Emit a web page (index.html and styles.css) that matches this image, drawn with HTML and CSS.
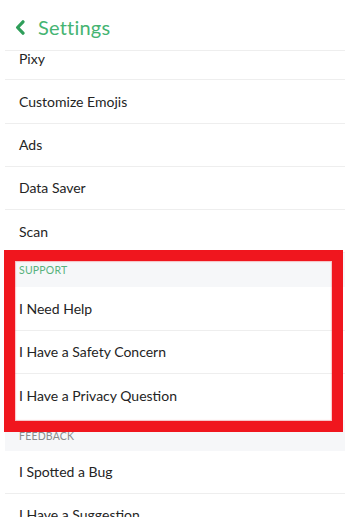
FILE: index.html
```html
<!DOCTYPE html>
<html>
<head>
<meta charset="utf-8">
<link rel="stylesheet" href="styles.css">
</head>
<body>
<div class="screen">
  <header class="topbar">
    <svg class="back" width="11" height="15" viewBox="0 0 11 15"><path d="M8 1.8 L2.6 7.5 L8 13.2" fill="none" stroke="#2f9e5a" stroke-width="3.2" stroke-linecap="round" stroke-linejoin="round"/></svg>
    <span class="title">Settings</span>
  </header>
  <div class="scroll">
    <div class="list">
      <div class="row">Pixy</div>
      <div class="row">Customize Emojis</div>
      <div class="row">Ads</div>
      <div class="row">Data Saver</div>
      <div class="row">Scan</div>
      <div class="section support">SUPPORT</div>
      <div class="row">I Need Help</div>
      <div class="row">I Have a Safety Concern</div>
      <div class="row last">I Have a Privacy Question</div>
      <div class="section feedback">FEEDBACK</div>
      <div class="row">I Spotted a Bug</div>
      <div class="row">I Have a Suggestion</div>
    </div>
  </div>
  <div class="highlight"></div>
</div>
</body>
</html>
```
FILE: styles.css
```css
html, body {
  margin: 0;
  padding: 0;
  background: #ffffff;
}
.screen {
  position: relative;
  width: 350px;
  height: 517px;
  overflow: hidden;
  font-family: Lato, "Open Sans", sans-serif;
}
.topbar {
  height: 50px;
  margin: 0 5px;
  border-bottom: 1px solid #eeeeee;
  display: flex;
  align-items: center;
  padding-left: 10px;
  gap: 12px;
  box-sizing: content-box;
}
.back {
  margin-top: 4px;
}
.title {
  font-size: 20px;
  color: #45b472;
  margin-top: 4px;
  letter-spacing: 0.2px;
}
.scroll {
  height: 466px;
  overflow: hidden;
  margin: 0 5px;
}
.list {
  margin-top: -14px;
}
.row {
  height: 42.25px;
  border-bottom: 1px solid #eeeeee;
  display: flex;
  align-items: center;
  padding-left: 14px;
  font-size: 14px;
  color: #242424;
}
.row.last {
  height: 45.25px;
  padding-bottom: 3px;
  box-sizing: border-box;
  height: 46.25px;
  border-bottom: none;
}
.section {
  height: 33.5px;
  background: #f6f7f9;
  display: flex;
  align-items: center;
  padding-left: 14px;
  font-size: 10.5px;
  color: #8a8a8a;
  letter-spacing: 0.2px;
}
.section.support {
  height: 34px;
  color: #58b27c;
}
.section.feedback {
  height: 30px;
  padding-top: 2px;
  box-sizing: border-box;
  height: 30.5px;
}
.highlight {
  position: absolute;
  left: 4px;
  top: 250px;
  width: 317px;
  height: 160px;
  border: 11px solid #f0161e;
  box-shadow: inset 0 0 1px 1px rgba(240, 22, 30, 0.25);
}
```
